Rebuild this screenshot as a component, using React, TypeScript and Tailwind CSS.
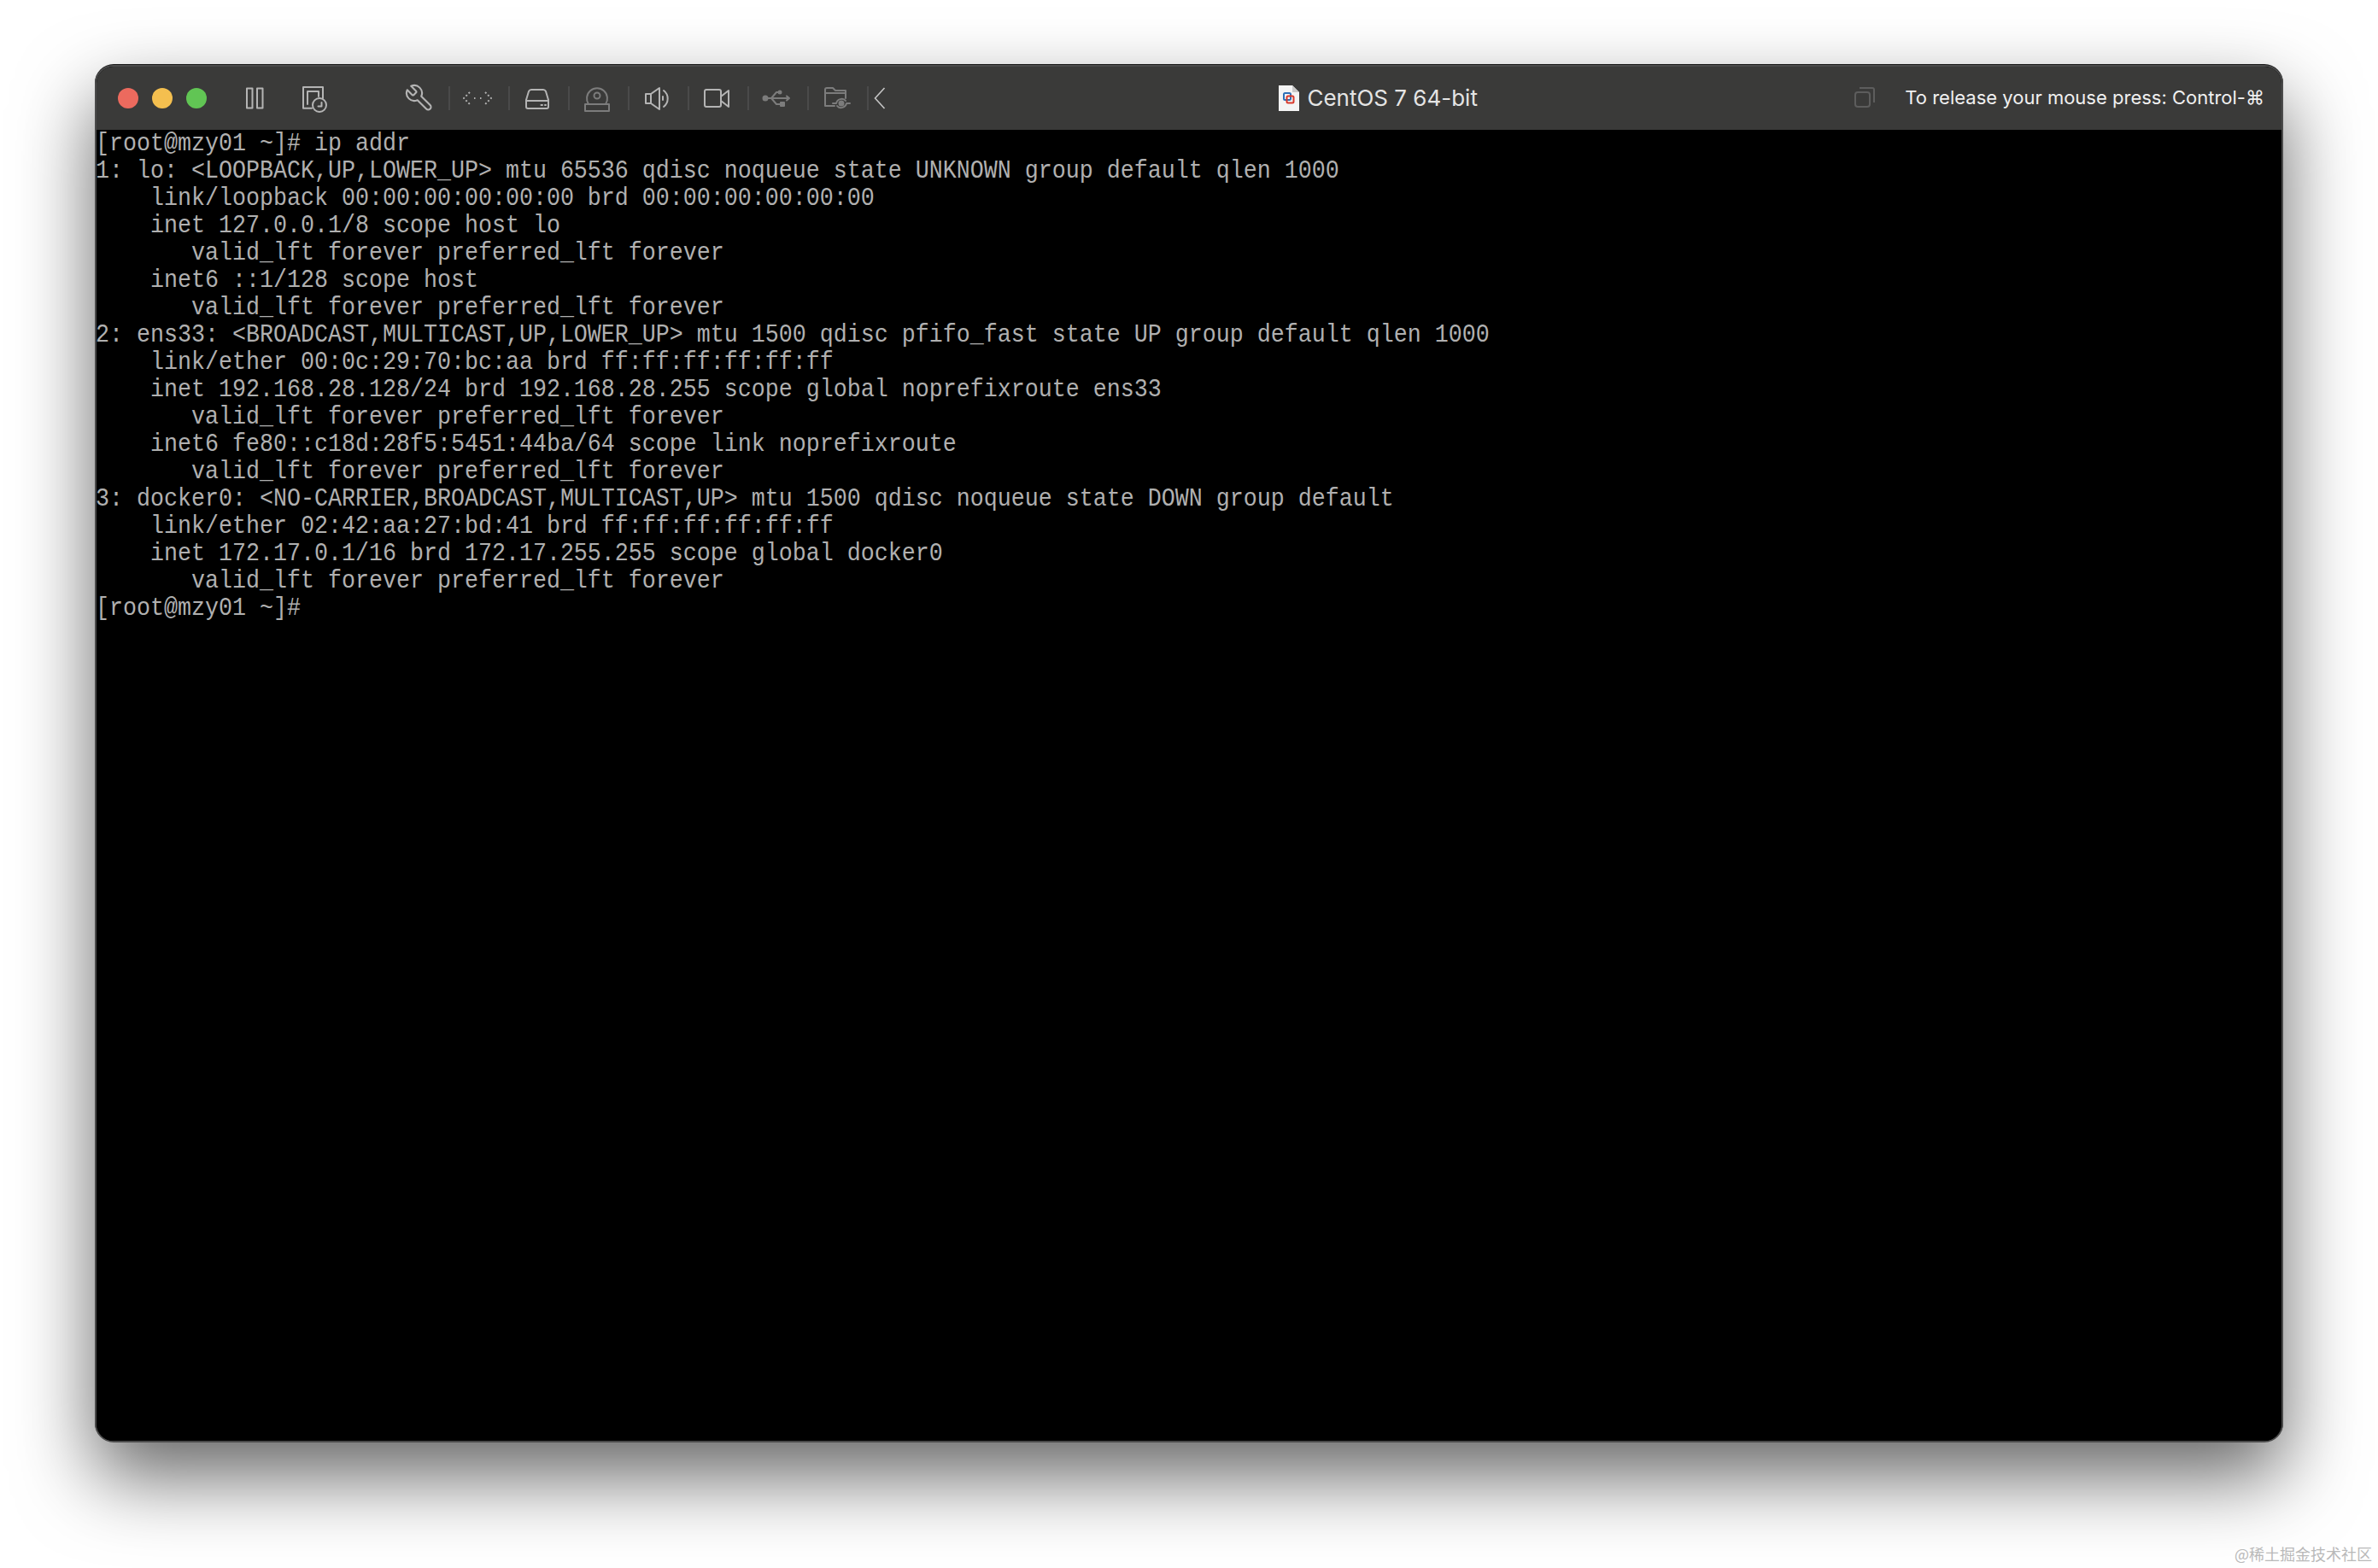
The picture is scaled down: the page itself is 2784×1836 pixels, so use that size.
const lines = [
  "[root@mzy01 ~]# ip addr",
  "1: lo: <LOOPBACK,UP,LOWER_UP> mtu 65536 qdisc noqueue state UNKNOWN group default qlen 1000",
  "    link/loopback 00:00:00:00:00:00 brd 00:00:00:00:00:00",
  "    inet 127.0.0.1/8 scope host lo",
  "       valid_lft forever preferred_lft forever",
  "    inet6 ::1/128 scope host",
  "       valid_lft forever preferred_lft forever",
  "2: ens33: <BROADCAST,MULTICAST,UP,LOWER_UP> mtu 1500 qdisc pfifo_fast state UP group default qlen 1000",
  "    link/ether 00:0c:29:70:bc:aa brd ff:ff:ff:ff:ff:ff",
  "    inet 192.168.28.128/24 brd 192.168.28.255 scope global noprefixroute ens33",
  "       valid_lft forever preferred_lft forever",
  "    inet6 fe80::c18d:28f5:5451:44ba/64 scope link noprefixroute",
  "       valid_lft forever preferred_lft forever",
  "3: docker0: <NO-CARRIER,BROADCAST,MULTICAST,UP> mtu 1500 qdisc noqueue state DOWN group default",
  "    link/ether 02:42:aa:27:bd:41 brd ff:ff:ff:ff:ff:ff",
  "    inet 172.17.0.1/16 brd 172.17.255.255 scope global docker0",
  "       valid_lft forever preferred_lft forever",
  "[root@mzy01 ~]#",
];

function Sep() {
  return <div className="w-[2px] h-[28px] bg-[#4a4a4a] shrink-0" />;
}

function Ico({ children, color = "#b4b4b4" }: { children: React.ReactNode; color?: string }) {
  return (
    <svg width="36" height="36" viewBox="0 0 36 36" fill="none" stroke={color} strokeWidth="2" strokeLinecap="round" strokeLinejoin="round">
      {children}
    </svg>
  );
}

function Slot({ children }: { children: React.ReactNode }) {
  return <div className="w-[68px] pr-[4px] flex items-center justify-center shrink-0">{children}</div>;
}

export default function App() {
  return (
    <div className="relative w-[2784px] h-[1836px] overflow-hidden bg-white pt-[76px] px-[111px]">
      <div className="w-[2562px] h-[1613px] flex flex-col rounded-[22px] overflow-hidden bg-black border-2 border-[#4a4a4a] shadow-[0_-1px_0_#1c1c1c,0_40px_90px_rgba(0,0,0,0.6)]">
        <div className="h-[74px] shrink-0 bg-[#3a3a39] flex items-center">
          <div className="flex items-center pl-[25px] shrink-0">
            <div className="flex items-center gap-[16px] mr-[38px]">
              <div className="w-[24px] h-[24px] rounded-full bg-[#ec6a5e]" />
              <div className="w-[24px] h-[24px] rounded-full bg-[#f4bf4f]" />
              <div className="w-[24px] h-[24px] rounded-full bg-[#61c554]" />
            </div>
            <Ico>
              <rect x="9" y="6.500" width="6.500" height="23" />
              <rect x="21" y="6.500" width="6.500" height="23" />
            </Ico>
            <div className="w-[34px]" />
            <Ico>
              <path d="M15 29.700H5V5h23v13" />
              <path d="M10 25V10h13v6" />
              <circle cx="24" cy="26" r="8" />
              <path d="M26.500 23v4.500h-4" />
            </Ico>
            <div className="w-[87px]" />
            <svg width="36" height="36" viewBox="0 0 24 24" fill="none" stroke="#b4b4b4" strokeWidth="1.400" strokeLinecap="round" strokeLinejoin="round">
              <path transform="translate(24 0) scale(-1 1)" d="M14.700 6.300a1 1 0 0 0 0 1.400l1.600 1.600a1 1 0 0 0 1.400 0l3.770-3.770a6 6 0 0 1-7.940 7.940l-6.910 6.910a2.120 2.120 0 0 1-3-3l6.910-6.910a6 6 0 0 1 7.940-7.940l-3.760 3.760z" />
            </svg>
            <div className="w-[16px]" />
            <Sep />
            <div className="w-[14px]" />
            <Ico color="#b0b0b0">
              <path d="M9 11l-7 7 7 7M27 11l7 7-7 7" strokeDasharray="2 2.400" strokeLinecap="butt" />
              <path d="M14 18h1.500M21 18h1.500" strokeLinecap="butt" />
            </Ico>
            <div className="w-[18px]" />
            <Sep />
            <Slot>
              <Ico>
                <path d="M11 8h14c1.500 0 2.500 1 3 2l3 10v8a2 2 0 0 1-2 2H7a2 2 0 0 1-2-2v-8l3-10c.5-1 1.500-2 3-2z" />
                <path d="M5 21h26" />
                <path d="M22.500 26h1.500M27 26h1" />
              </Ico>
            </Slot>
            <Sep />
            <Slot>
              <Ico color="#7c7c7c">
                <path d="M8 25a12 12 0 1 1 20 0" />
                <circle cx="18" cy="15" r="3.500" />
                <rect x="4" y="25" width="28" height="8" />
              </Ico>
            </Slot>
            <Sep />
            <Slot>
              <Ico>
                <path d="M5 13h6l10-7v25l-10-7H5z" />
                <path d="M11 13v11" />
                <path d="M26 9a12 12 0 0 1 0 19" />
                <path d="M25 16v4" />
              </Ico>
            </Slot>
            <Sep />
            <Slot>
              <Ico>
                <rect x="4" y="8" width="19" height="20" rx="2" />
                <path d="M23 16l9-7v19l-9-7" />
              </Ico>
            </Slot>
            <Sep />
            <Slot>
              <Ico color="#7c7c7c">
                <circle cx="5" cy="18" r="2.500" fill="#7c7c7c" />
                <path d="M7 18h26M30 15.500l3 2.500-3 2.500" />
                <path d="M12 18l6-7h3M12 18l6 7h5" />
                <circle cx="22" cy="11" r="1.500" fill="#7c7c7c" />
                <rect x="23" y="23" width="4" height="4" fill="#7c7c7c" />
              </Ico>
            </Slot>
            <Sep />
            <Slot>
              <Ico color="#7c7c7c">
                <path d="M16 27H5V8a2 2 0 0 1 2-2h7l3 3h12v9" />
                <path d="M5 12h24" />
                <circle cx="24" cy="24" r="2.500" fill="#7c7c7c" />
                <path d="M18 24c1-5 8-7 11-3M30 24c-1 5-8 7-11 3M14 24h3M31 24h3" />
              </Ico>
            </Slot>
            <Sep />
            <div className="ml-[6px]">
              <svg width="14" height="26" viewBox="0 0 14 26" fill="none" stroke="#c4c4c4" strokeWidth="1.600">
                <path d="M12.500 1L1.500 13l11 12" />
              </svg>
            </div>
          </div>
          <div className="flex-1 flex items-center justify-center gap-[9px] pl-[19px]">
            <svg width="24" height="30" viewBox="0 0 24 30">
              <path d="M0 0h16l8 8v22H0z" fill="#f4f4f4" />
              <path d="M16 0v8h8z" fill="#c9c9c9" />
              <rect x="6" y="9" width="8" height="8" rx="1.500" fill="none" stroke="#2f6fb5" strokeWidth="2" />
              <rect x="9.500" y="12.500" width="8" height="8" rx="1.500" fill="none" stroke="#d8392b" strokeWidth="2" />
            </svg>
            <span className="text-[26px] leading-none text-[#e4e4e4] font-['Inter','Liberation_Sans',sans-serif]">CentOS 7 64-bit</span>
          </div>
          <div className="flex items-center justify-end pr-[20px] pb-[2px] shrink-0">
            <svg width="24" height="24" viewBox="0 0 24 24" fill="none" stroke="#5d5d5d" strokeWidth="2" className="mr-[35px]">
              <rect x="1" y="6" width="17" height="17" rx="3" />
              <path d="M6 1h15a2 2 0 0 1 2 2v15" />
            </svg>
            <span className="text-[22px] leading-none text-[#f0f0f0] whitespace-nowrap font-['Inter','Liberation_Sans','DejaVu_Sans',sans-serif]">To release your mouse press: Control-⌘</span>
          </div>
        </div>
        <div className="flex-1 bg-black -ml-[1px] font-['Liberation_Mono',monospace] text-[26.67px] leading-[32px] text-[#b0b0b0] whitespace-pre">
          {lines.map((l, i) => (
            <div key={i} className="h-[32px] scale-y-[1.14]">{l}</div>
          ))}
        </div>
      </div>
      <div className="absolute right-[7px] bottom-[5px] text-[18px] leading-[24px] text-[#b9b9b9] font-['Noto_Sans_CJK_SC',sans-serif]">@稀土掘金技术社区</div>
    </div>
  );
}
